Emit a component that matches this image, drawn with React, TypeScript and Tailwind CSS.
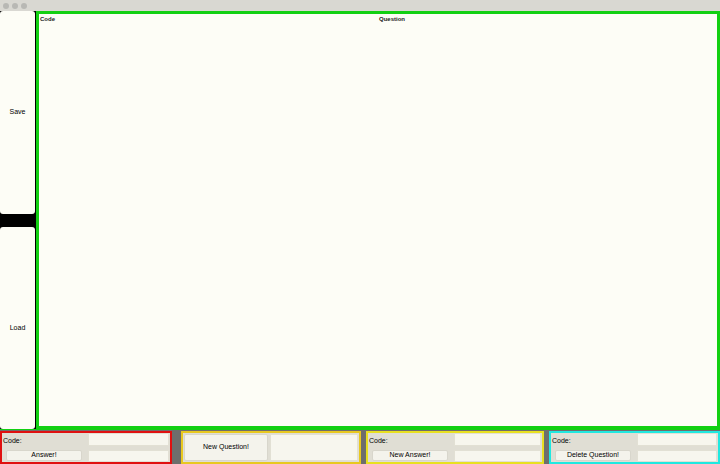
import React from 'react';

const Field = ({ className = '' }: { className?: string }) => (
  <div className={`bg-[#f7f6ee] border border-[#e2e0d4] ${className}`} />
);

const Btn = ({ label, className = '' }: { label: string; className?: string }) => (
  <div
    className={`flex items-center justify-center bg-[#f4f3ec] border border-[#d8d6cc] rounded-[2px] text-[7px] text-black ${className}`}
  >
    {label}
  </div>
);

const CodePanel = ({ border, button }: { border: string; button: string }) => (
  <div className={`flex-1 flex border-2 ${border} bg-[#e0ded4]`}>
    <div className="w-[86px] flex flex-col pl-[1px] pt-[3px]">
      <span className="text-[7px] leading-[9px]">Code:</span>
      <Btn label={button} className="mt-[5px] ml-[3px] w-[76px] h-[11px]" />
    </div>
    <div className="flex-1 flex flex-col gap-[4px] pr-[1px]">
      <Field className="h-[13px]" />
      <Field className="flex-1" />
    </div>
  </div>
);

export default function App() {
  return (
    <div
      className="w-[720px] h-[464px] flex flex-col bg-[#d9d8d2] overflow-hidden"
      style={{ fontFamily: '"Liberation Sans", Arial, sans-serif' }}
    >
      {/* title bar */}
      <div className="h-[11px] flex items-center gap-[3px] pl-[3px]">
        <span className="w-[6px] h-[6px] rounded-full bg-[#b8b8b4]" />
        <span className="w-[6px] h-[6px] rounded-full bg-[#b8b8b4]" />
        <span className="w-[6px] h-[6px] rounded-full bg-[#b8b8b4]" />
      </div>

      {/* main */}
      <div className="flex h-[418px] bg-black">
        <div className="w-[35px] flex flex-col gap-[13px] bg-black">
          <div className="flex-1 flex items-center justify-center bg-[#fdfdf6] rounded-[3px] text-[7px]">
            Save
          </div>
          <div className="flex-1 flex items-center justify-center bg-[#fdfdf6] rounded-[3px] text-[7px]">
            Load
          </div>
        </div>
        <div className="flex-1 ml-[1px] border-[3px] border-[#12d012] bg-[#fdfdf6]">
          <div className="flex text-[6px] font-bold leading-[8px] pt-[1px] text-[#222]">
            <span className="pl-[1px] w-[170px]">Code</span>
            <span className="flex-1 pl-[170px]">Question</span>
          </div>
        </div>
      </div>

      {/* bottom */}
      <div className="flex-1 flex flex-col bg-[#6e6e6c]">
        <div className="h-[1px] bg-[#12d012]" />
        <div className="flex-1 flex gap-[5px] pt-[1px]">
          <div className="w-[172px] flex">
            <CodePanel border="border-[#e01010]" button="Answer!" />
          </div>
          <div className="w-[180px] flex border-2 border-[#e8c820] bg-[#e0ded4] ml-[4px] gap-[2px] p-[1px]">
            <Btn label="New Question!" className="w-[84px]" />
            <Field className="flex-1" />
          </div>
          <div className="w-[178px] flex">
            <CodePanel border="border-[#e8e020]" button="New Answer!" />
          </div>
          <div className="flex-1 flex">
            <CodePanel border="border-[#20e8e0]" button="Delete Question!" />
          </div>
        </div>
      </div>
    </div>
  );
}
